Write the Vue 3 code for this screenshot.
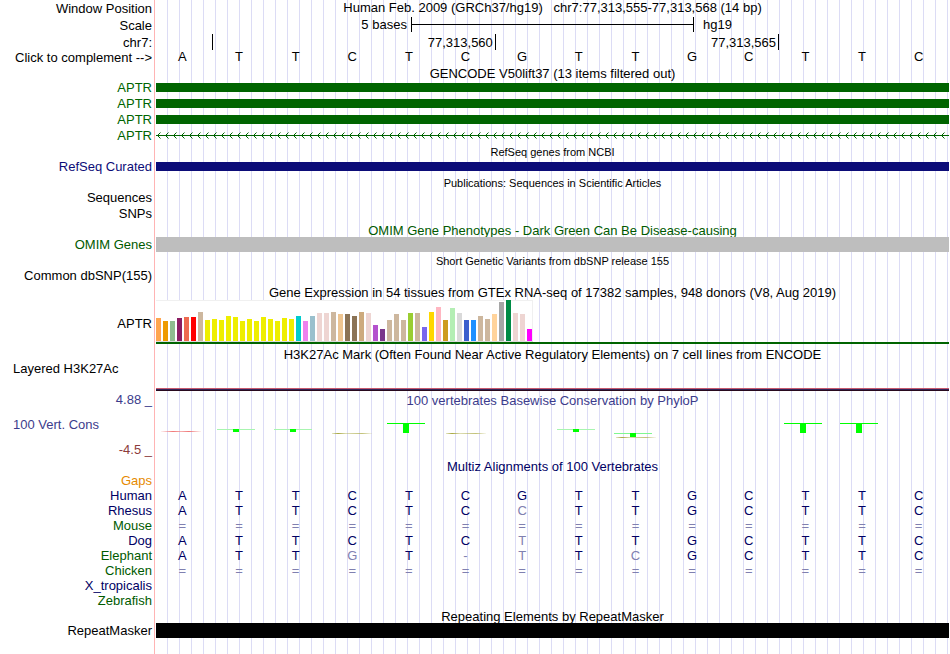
<template>
  <main class="browser">
    <div class="row ruler">
      <div class="label">Window Position</div>
      <div class="heading">{{ windowTitle }}</div>
    </div>
    <div class="row ruler">
      <div class="label">Scale</div>
      <div class="scale">
        <span class="scale-start">5 bases</span>
        <span class="scale-bar"><i></i></span>
        <span class="scale-end">hg19</span>
      </div>
    </div>
    <div class="row chrom">
      <div class="label">chr7:</div>
      <div class="positions">
        <span class="tick"></span>
        <span class="tick">77,313,560</span>
        <span class="tick">77,313,565</span>
      </div>
    </div>
    <div class="row">
      <div class="label">Click to complement --&gt;</div>
      <div class="bases">
        <span v-for="(base, i) in sequence" :key="i">{{ base }}</span>
      </div>
    </div>

    <div class="row title"><div class="heading">GENCODE V50lift37 (13 items filtered out)</div></div>
    <div v-for="n in 3" :key="n" class="row item green">
      <div class="label">APTR</div>
      <div class="bar thin"></div>
    </div>
    <div class="row item green">
      <div class="label">APTR</div>
      <svg class="intron" height="7">
        <defs>
          <pattern id="strand" width="8" height="7" patternUnits="userSpaceOnUse">
            <path d="M0 3.5H8M4.5 0.5L1.5 3.5L4.5 6.5" fill="none" stroke="#006400" stroke-width="1" />
          </pattern>
        </defs>
        <rect width="100%" height="7" fill="url(#strand)" />
      </svg>
    </div>

    <div class="row title small"><div class="heading">RefSeq genes from NCBI</div></div>
    <div class="row item navy">
      <div class="label">RefSeq Curated</div>
      <div class="bar thin"></div>
    </div>

    <div class="row title small"><div class="heading">Publications: Sequences in Scientific Articles</div></div>
    <div class="row item"><div class="label">Sequences</div></div>
    <div class="row item"><div class="label">SNPs</div></div>

    <div class="row title omim"><div class="heading">OMIM Gene Phenotypes - Dark Green Can Be Disease-causing</div></div>
    <div class="row item omim">
      <div class="label">OMIM Genes</div>
      <div class="bar thick"></div>
    </div>

    <div class="row title small"><div class="heading">Short Genetic Variants from dbSNP release 155</div></div>
    <div class="row item"><div class="label">Common dbSNP(155)</div></div>

    <div class="row title">
      <div class="heading">Gene Expression in 54 tissues from GTEx RNA-seq of 17382 samples, 948 donors (V8, Aug 2019)</div>
    </div>
    <div class="row gtex">
      <div class="label">APTR</div>
      <div class="expression">
        <div class="chart">
          <i
            v-for="(tissue, i) in tissues"
            :key="i"
            :style="{ height: tissue[0] + 'px', backgroundColor: tissue[1] }"
          ></i>
        </div>
      </div>
    </div>

    <div class="row title">
      <div class="heading">H3K27Ac Mark (Often Found Near Active Regulatory Elements) on 7 cell lines from ENCODE</div>
    </div>
    <div class="row histone">
      <div class="label left">Layered H3K27Ac</div>
      <div class="signal"></div>
    </div>

    <div class="row title phylop">
      <div class="label">4.88 _</div>
      <div class="heading">100 vertebrates Basewise Conservation by PhyloP</div>
    </div>
    <div class="row cons">
      <div class="cons-labels">
        <span class="cons-name">100 Vert. Cons</span>
        <span class="cons-min">-4.5 _</span>
      </div>
      <svg class="wiggle" viewBox="0 0 793 51" preserveAspectRatio="none" shape-rendering="crispEdges">
        <defs>
          <linearGradient id="fadeRed">
            <stop offset="0" stop-color="#f07878" stop-opacity="0.1" />
            <stop offset="0.3" stop-color="#f07878" />
            <stop offset="0.5" stop-color="#f07878" stop-opacity="0.6" />
            <stop offset="0.7" stop-color="#f07878" />
            <stop offset="1" stop-color="#f07878" stop-opacity="0.1" />
          </linearGradient>
          <linearGradient id="fadeOlive">
            <stop offset="0" stop-color="#a8a840" stop-opacity="0.3" />
            <stop offset="0.15" stop-color="#a8a840" />
            <stop offset="0.35" stop-color="#a8a840" stop-opacity="0.4" />
            <stop offset="0.75" stop-color="#a8a840" stop-opacity="0.7" />
            <stop offset="1" stop-color="#a8a840" stop-opacity="0.1" />
          </linearGradient>
        </defs>
        <rect v-for="(s, i) in strokes" :key="'s' + i" :x="s.x" :y="s.y" :width="s.w" height="1" :fill="s.fill" />
        <rect v-for="(b, i) in stems" :key="'b' + i" :x="b.x" :y="b.y" width="6" :height="b.h" fill="#00ff00" />
      </svg>
    </div>

    <div class="row title multiz"><div class="heading">Multiz Alignments of 100 Vertebrates</div></div>
    <table class="alignment">
      <tbody>
        <tr v-for="s in species" :key="s.name">
          <th scope="row" :class="s.tone">{{ s.name }}</th>
          <td v-for="(base, i) in sequence" :key="i" :class="{ diff: s.bases && s.bases[i] !== base }">
            {{ s.bases ? s.bases[i] : '' }}
          </td>
        </tr>
      </tbody>
    </table>

    <div class="row title repeats"><div class="heading">Repeating Elements by RepeatMasker</div></div>
    <div class="row item">
      <div class="label">RepeatMasker</div>
      <div class="bar thick"></div>
    </div>
  </main>
</template>

<script setup>
const windowTitle = 'Human Feb. 2009 (GRCh37/hg19)\u00a0\u00a0 chr7:77,313,555-77,313,568 (14 bp)';
const sequence = 'ATTCTCGTTGCTTC'.split('');

const species = [
  { name: 'Gaps', tone: 'orange' },
  { name: 'Human', tone: 'blue', bases: 'ATTCTCGTTGCTTC' },
  { name: 'Rhesus', tone: 'blue', bases: 'ATTCTCCTTGCTTC' },
  { name: 'Mouse', tone: 'dark-green', bases: '==============' },
  { name: 'Dog', tone: 'blue', bases: 'ATTCTCTTTGCTTC' },
  { name: 'Elephant', tone: 'dark-green', bases: 'ATTGT-TTCGCTTC' },
  { name: 'Chicken', tone: 'dark-green', bases: '==============' },
  { name: 'X_tropicalis', tone: 'blue' },
  { name: 'Zebrafish', tone: 'dark-green' },
];

// bar height and colour of each tissue
const tissues = [
  [23, '#ffa54f'], [20, '#ee9a00'], [20, '#8fbc8f'], [23, '#8b1c62'], [24, '#ee6a50'], [24, '#ff0000'],
  [29, '#cdb79e'], [21, '#eeee00'], [22, '#eeee00'], [21, '#eeee00'], [25, '#eeee00'], [24, '#eeee00'],
  [20, '#eeee00'], [22, '#eeee00'], [20, '#eeee00'], [24, '#eeee00'], [22, '#eeee00'], [20, '#eeee00'],
  [23, '#eeee00'], [22, '#eeee00'], [25, '#00cdcd'], [20, '#ee82ee'], [25, '#9ac0cd'], [28, '#eed5d2'],
  [28, '#eed5d2'], [29, '#cdb79e'], [27, '#eec591'], [27, '#8b7355'], [25, '#8b7355'], [29, '#cdaa7d'],
  [28, '#eed5d2'], [16, '#b452cd'], [12, '#7a378b'], [21, '#cdb79e'], [27, '#cdb79e'], [21, '#cdb79e'],
  [28, '#9acd32'], [28, '#cdb79e'], [14, '#7a67ee'], [29, '#ffd700'], [34, '#ffb6c1'], [21, '#cd9b1d'],
  [33, '#b4eeb4'], [28, '#d9d9d9'], [21, '#3a5fcd'], [21, '#1e90ff'], [25, '#cdb79e'], [22, '#cdb79e'],
  [27, '#ffd39b'], [39, '#a6a6a6'], [41, '#008b45'], [28, '#eed5d2'], [27, '#eed5d2'], [12, '#ff00ff'],
];

const strokes = [
  { x: 5, y: 25, w: 40, fill: 'url(#fadeRed)' },
  { x: 61, y: 23, w: 38, fill: '#a8f5b0' },
  { x: 118, y: 23, w: 38, fill: '#a8f5b0' },
  { x: 176, y: 27, w: 40, fill: 'url(#fadeOlive)' },
  { x: 231, y: 17, w: 38, fill: '#00ff00' },
  { x: 290, y: 27, w: 40, fill: 'url(#fadeOlive)' },
  { x: 401, y: 23, w: 38, fill: '#a8f5b0' },
  { x: 458, y: 27, w: 38, fill: '#80f890' },
  { x: 460, y: 31, w: 40, fill: 'url(#fadeOlive)' },
  { x: 628, y: 17, w: 38, fill: '#00ff00' },
  { x: 684, y: 17, w: 38, fill: '#00ff00' },
];

const stems = [
  { x: 77, y: 23, h: 3 },
  { x: 134, y: 23, h: 3 },
  { x: 247, y: 17, h: 10 },
  { x: 417, y: 23, h: 3 },
  { x: 474, y: 27, h: 4 },
  { x: 644, y: 17, h: 10 },
  { x: 700, y: 17, h: 10 },
];
</script>

<style>
body {
  margin: 0;
  background: #fff;
}
</style>

<style scoped>
.browser {
  box-sizing: border-box;
  min-height: 100vh;
  padding-right: 1px;
  font-family: "Liberation Sans", Arial, sans-serif;
  font-size: 13px;
  line-height: 15px;
  color: #000;
  /* red divider, blank label column, vertical guide lines */
  background:
    linear-gradient(#ffb4b4, #ffb4b4) 154px 0 / 1px 100% no-repeat,
    linear-gradient(#fff, #fff) 0 0 / 166px 100% no-repeat,
    linear-gradient(to right, #dcdcf5 1px, transparent 1px) 11px 0 / 12px 100%;
}

.row {
  display: grid;
  grid-template-columns: 156px minmax(0, 1fr);
  height: 15px;
}
.row.ruler {
  height: 17px;
}
.row.item {
  height: 16px;
}

.label {
  grid-column: 1;
  padding: 1px 4px 0 0;
  text-align: right;
  white-space: nowrap;
}
.label.left {
  padding-left: 13px;
  text-align: left;
}
.heading {
  grid-column: 2;
  text-align: center;
  white-space: nowrap;
}
.title .heading {
  padding-top: 2px;
}
.small .heading {
  font-size: 11px;
}

.scale {
  display: grid;
  grid-template-columns: 9fr 10fr 9fr;
}
.scale-start {
  padding-right: 4px;
  text-align: right;
}
.scale-end {
  padding-left: 9px;
}
.scale-bar {
  box-sizing: border-box;
  height: 15px;
  border: solid #000;
  border-width: 0 1px;
}
.scale-bar i {
  display: block;
  height: 1px;
  margin-top: 7px;
  background: #000;
}
.positions {
  display: grid;
  grid-template-columns: 1fr 5fr 5fr 3fr;
  height: 15px;
}
.tick {
  border-right: 1px solid #000;
  text-align: right;
  padding: 1px 2px 0 0;
}

.bases {
  display: grid;
  grid-template-columns: repeat(14, 1fr);
}
.bases span {
  padding-right: 4px;
  text-align: center;
}

.green {
  color: #006400;
}
.navy {
  color: #0c0c78;
}
.omim {
  color: #005a00;
}
.bar {
  background: currentColor;
}
.bar.thin {
  height: 9px;
  margin-top: 4px;
}
.bar.thick {
  height: 15px;
  margin-top: 1px;
}
.omim .bar {
  background: #bebebe;
}
.intron {
  display: block;
  width: 100%;
  margin-top: 5px;
}

.row.gtex {
  height: 47px;
}
.gtex .label {
  padding-top: 18px;
}
.expression {
  height: 42px;
  margin-top: 2px;
  border-bottom: 2px solid #006400;
}
.chart {
  display: flex;
  align-items: flex-end;
  gap: 2px;
  box-sizing: border-box;
  width: fit-content;
  height: 42px;
  padding-right: 1px;
  background: #fff;
  border-bottom: 1px solid #dcdcdc;
  box-shadow: inset 0 1px #f0f0f0, inset -1px 0 #f0f0f0;
}
.chart i {
  width: 5px;
}

.row.histone {
  height: 31px;
}
.signal {
  align-self: end;
  height: 2px;
  border-top: 1px solid #c85a6e;
  background: linear-gradient(#32235a 50%, #280a1e 50%);
}

.phylop,
.cons-name {
  color: #3c3c8c;
}
.row.cons {
  height: 51px;
}
.cons-labels {
  display: flex;
  flex-direction: column;
  justify-content: flex-end;
  gap: 10px;
  padding: 0 4px 0 13px;
}
.cons-min {
  text-align: right;
  color: #8c3c3c;
}
.wiggle {
  display: block;
  width: 100%;
  height: 51px;
}
.multiz {
  color: #000064;
}

.alignment {
  width: 100%;
  margin-top: 1px;
  table-layout: fixed;
  border-collapse: collapse;
  color: #000064;
}
.alignment th {
  width: 152px;
  padding: 0 4px 0 0;
  font-weight: normal;
  text-align: right;
}
.alignment td {
  padding: 0 4px 0 0;
  text-align: center;
}
.alignment .diff {
  color: #8080b0;
}
.alignment .orange {
  color: #e68a00;
}
.alignment .blue {
  color: #000064;
}
.alignment .dark-green {
  color: #005a00;
}

.row.repeats {
  height: 14px;
}
.repeats .heading {
  padding-top: 1px;
}
</style>
